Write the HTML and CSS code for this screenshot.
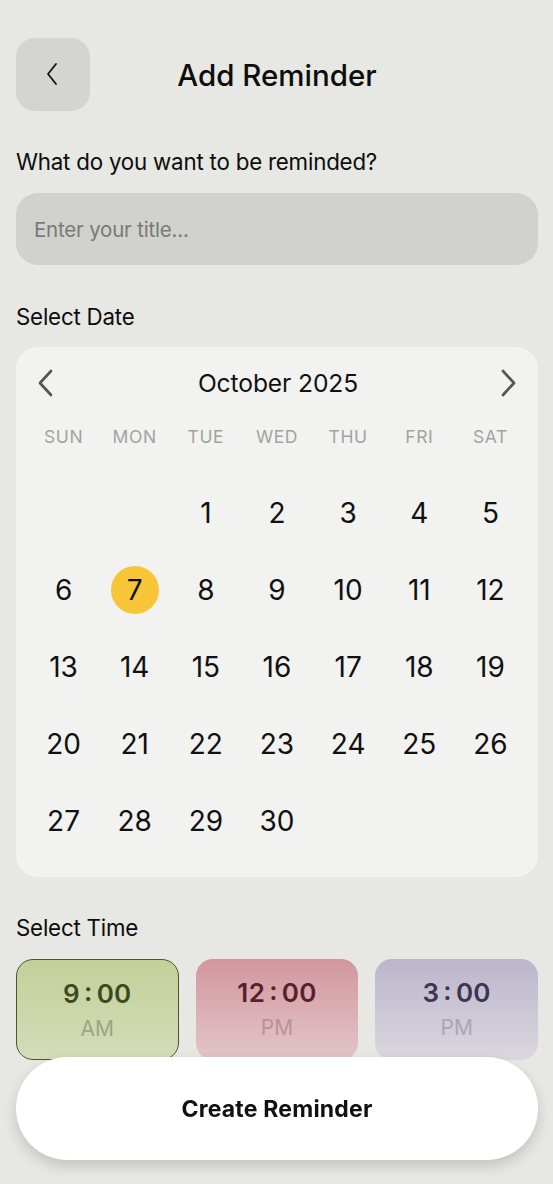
FILE: index.html
```html
<!DOCTYPE html>
<html lang="en">
<head>
<meta charset="utf-8">
<title>Add Reminder</title>
<link rel="stylesheet" href="styles.css">
</head>
<body>
<div class="screen">
  <header class="topbar">
    <button class="back-btn" aria-label="Back">
      <svg width="14" height="26" viewBox="0 0 14 26"><path d="M11 3 L3 13 L11 23" fill="none" stroke="#111" stroke-width="1.8" stroke-linecap="round" stroke-linejoin="round"/></svg>
    </button>
    <h1 class="title">Add Reminder</h1>
    <span></span>
  </header>

  <p class="label label-first">What do you want to be reminded?</p>
  <div class="input">Enter your title...</div>

  <p class="label label-date">Select Date</p>
  <section class="calendar">
    <div class="cal-head">
      <svg class="chev" width="17" height="28" viewBox="0 0 17 28"><path d="M14 2 L3 14 L14 26" fill="none" stroke="#555" stroke-width="2.7" stroke-linecap="round" stroke-linejoin="round"/></svg>
      <span class="month">October 2025</span>
      <svg class="chev" width="17" height="28" viewBox="0 0 17 28"><path d="M3 2 L14 14 L3 26" fill="none" stroke="#555" stroke-width="2.7" stroke-linecap="round" stroke-linejoin="round"/></svg>
    </div>
    <div class="weekdays">
      <span>SUN</span><span>MON</span><span>TUE</span><span>WED</span><span>THU</span><span>FRI</span><span>SAT</span>
    </div>
    <div class="days">
      <span></span><span></span>
      <span>1</span><span>2</span><span>3</span><span>4</span><span>5</span>
      <span>6</span><span class="sel"><i>7</i></span><span>8</span><span>9</span><span>10</span><span>11</span><span>12</span>
      <span>13</span><span>14</span><span>15</span><span>16</span><span>17</span><span>18</span><span>19</span>
      <span>20</span><span>21</span><span>22</span><span>23</span><span>24</span><span>25</span><span>26</span>
      <span>27</span><span>28</span><span>29</span><span>30</span>
    </div>
  </section>

  <p class="label label-time">Select Time</p>
  <div class="times">
    <div class="time t-green active"><span class="hh">9<span class="colon">:</span>00</span><span class="ap">AM</span></div>
    <div class="time t-pink"><span class="hh">12<span class="colon">:</span>00</span><span class="ap">PM</span></div>
    <div class="time t-purple"><span class="hh">3<span class="colon">:</span>00</span><span class="ap">PM</span></div>
  </div>

  <button class="create">Create Reminder</button>
</div>
</body>
</html>
```
FILE: styles.css
```css
* { box-sizing: border-box; }
html, body { margin: 0; padding: 0; }
body {
  background: #e7e7e3;
  font-family: Inter, "Noto Sans", "Liberation Sans", sans-serif;
  color: #111;
  width: 553px;
  height: 1184px;
  overflow: hidden;
}
.screen {
  padding: 38px 15px 0 16px;
}
.topbar {
  display: grid;
  grid-template-columns: 74px 1fr 74px;
  align-items: center;
  height: 73px;
}
.back-btn {
  width: 74px;
  height: 73px;
  border: none;
  border-radius: 19px;
  background: #d4d4d0;
  display: flex;
  align-items: center;
  justify-content: center;
  padding: 0;
  margin: 0;
}
.back-btn svg { margin-left: -2px; margin-top: -2px; }
.title {
  margin: 0;
  text-align: center;
  font-size: 29.5px;
  font-weight: 500;
  letter-spacing: 0;
  color: #0d0d0d;
}
.label {
  margin: 0;
  font-size: 22.3px;
  line-height: 26px;
  font-weight: 400;
  letter-spacing: -0.2px;
  color: #0d0d0d;
}
.label-first { margin-top: 38px; }
.input {
  margin-top: 18px;
  height: 72px;
  border-radius: 22px;
  background: #d1d1cd;
  display: flex;
  align-items: center;
  padding-left: 18px;
  font-size: 20.5px;
  color: #7a7a76;
  letter-spacing: -0.2px;
}
.label-date { margin-top: 39px; }
.calendar {
  margin-top: 17px;
  background: #f2f2f0;
  border-radius: 22px;
  padding: 20px 12px 18px;
}
.cal-head {
  height: 32px;
  display: flex;
  align-items: center;
  justify-content: space-between;
  padding: 0 9px 0 9px;
}
.month {
  font-size: 24.6px;
  font-weight: 400;
  color: #111;
  letter-spacing: -0.1px;
  margin-left: 2px;
}
.weekdays {
  margin-top: 27px;
  display: grid;
  grid-template-columns: repeat(7, 1fr);
  text-align: center;
  font-size: 17.5px;
  line-height: 22px;
  color: #a3a3a1;
  letter-spacing: 0.6px;
}
.days {
  margin-top: 26px;
  display: grid;
  grid-template-columns: repeat(7, 1fr);
  grid-auto-rows: 77px;
  text-align: center;
  font-size: 28px;
  color: #111;
}
.days span {
  display: flex;
  align-items: center;
  justify-content: center;
}
.days .sel i {
  font-style: normal;
  width: 48px;
  height: 48px;
  border-radius: 50%;
  background: #f7c536;
  display: flex;
  align-items: center;
  justify-content: center;
}
.label-time { margin-top: 38px; }
.times {
  margin-top: 18px;
  display: grid;
  grid-template-columns: repeat(3, 1fr);
  gap: 17px;
}
.time {
  height: 101px;
  border-radius: 17px;
  display: flex;
  flex-direction: column;
  align-items: center;
  padding-top: 18px;
}
.hh {
  font-size: 26px;
  font-weight: 600;
  line-height: 32px;
  letter-spacing: 0.3px;
}
.colon {
  display: inline-block;
  margin: 0 4px;
  position: relative;
  top: -2px;
}
.ap {
  margin-top: 7px;
  font-size: 21px;
  line-height: 24px;
}
.t-green {
  background: linear-gradient(#c3d098, #d4dcba);
  border: 1.5px solid #4a5530;
}
.t-green .hh { color: #3c4b1e; }
.t-green .ap { color: #9aa787; }
.t-pink { background: linear-gradient(#d3969f, #e2c6c9); }
.t-pink .hh { color: #5a1f2c; }
.t-pink .ap { color: #b7949a; }
.t-purple { background: linear-gradient(#bcb5cb, #dad8df); }
.t-purple .hh { color: #3d3553; }
.t-purple .ap { color: #aaa6b4; }
.create {
  position: fixed;
  left: 16px;
  right: 15px;
  bottom: 24px;
  height: 103px;
  border: none;
  border-radius: 52px;
  background: #fff;
  box-shadow: 0 6px 14px rgba(0, 0, 0, 0.16);
  font-family: Inter, "Noto Sans", "Liberation Sans", sans-serif;
  font-size: 23px;
  font-weight: 700;
  color: #111;
  letter-spacing: 0.2px;
}
```
